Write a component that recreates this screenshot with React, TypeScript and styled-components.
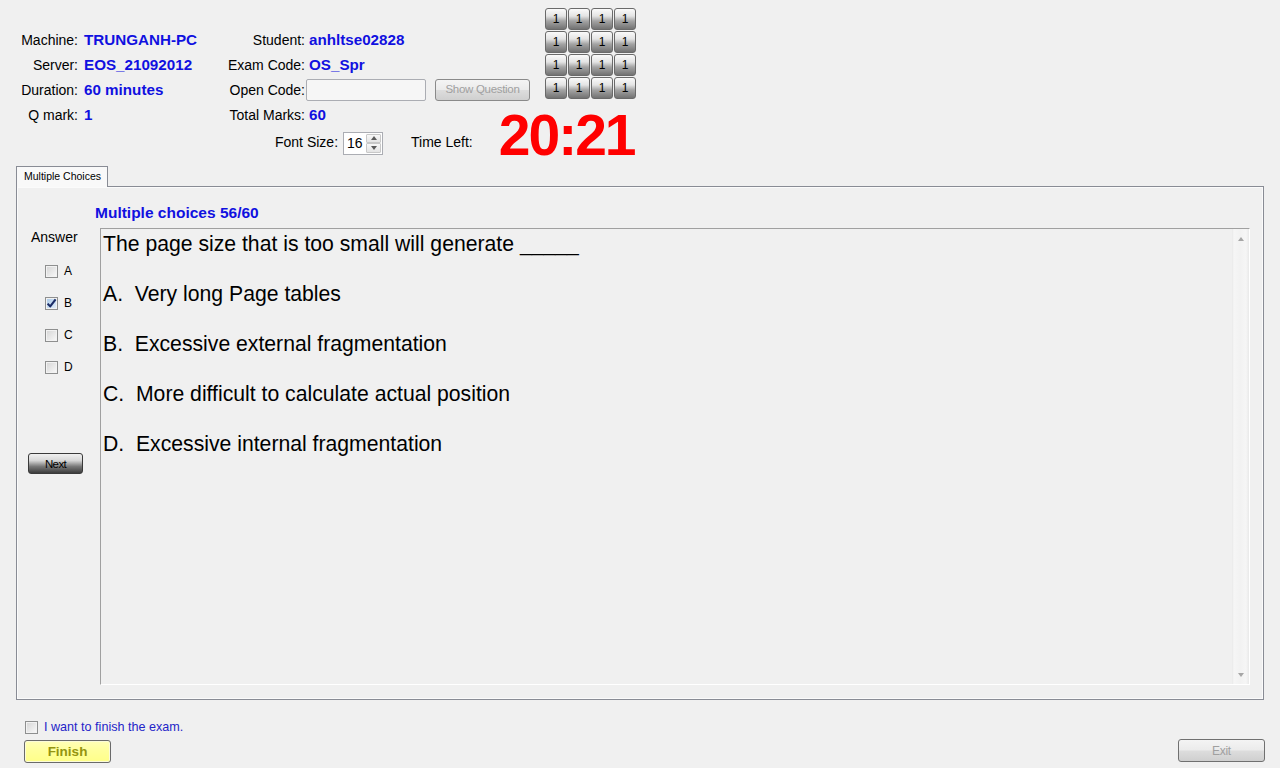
import React from "react";
import styled, { createGlobalStyle } from "styled-components";

const GlobalStyle = createGlobalStyle`
  html, body { margin: 0; padding: 0; background: #f0f0f0; }
  body { font-family: "Liberation Sans", Arial, sans-serif; color: #000; overflow: hidden; }
  * { box-sizing: border-box; }
`;

const Page = styled.div`
  width: 1280px;
  height: 768px;
  display: flex;
  flex-direction: column;
  background: #f0f0f0;
`;

const Header = styled.header`
  display: grid;
  grid-template-columns: 545px auto;
  grid-template-rows: 127px auto;
  margin-bottom: 11px;
`;

const InfoGrid = styled.div`
  grid-column: 1;
  grid-row: 1;
  padding-top: 27px;
  display: grid;
  grid-template-columns: 78px 122px 105px auto;
  grid-auto-rows: 25px;
  align-items: center;
  font-size: 14px;
`;

const Label = styled.span`
  text-align: right;
  white-space: nowrap;
`;

const Value = styled.span<{ $indent: number }>`
  padding-left: ${(p) => p.$indent}px;
  font-weight: bold;
  font-size: 15.2px;
  color: #1010e0;
  white-space: nowrap;
`;

const CodeCell = styled.div`
  display: flex;
  align-items: center;
`;

const CodeInput = styled.div`
  width: 120px;
  height: 22px;
  margin-left: 1px;
  background: #f6f6f6;
  border: 1px solid #abadb3;
  border-radius: 2px;
`;

const GreyButton = styled.button<{ $w: number; $h: number }>`
  width: ${(p) => p.$w}px;
  height: ${(p) => p.$h}px;
  padding: 0;
  border: 1px solid #707070;
  border-radius: 3px;
  background: linear-gradient(#f4f4f4 0%, #ebebeb 48%, #dddddd 52%, #cfcfcf 100%);
  color: #a0a0a0;
  font-family: "Liberation Sans", Arial, sans-serif;
  font-size: 11.5px;
  letter-spacing: -0.3px;
  display: flex;
  align-items: center;
  justify-content: center;
`;

const ShowQuestion = styled(GreyButton)`
  margin-left: 9px;
  border-color: #8a8a8a;
  padding-bottom: 2px;
`;

const NumberGrid = styled.div`
  grid-column: 2;
  grid-row: 1;
  align-self: start;
  margin-top: 8px;
  display: grid;
  grid-template-columns: repeat(4, 22px);
  grid-auto-rows: 22px;
  gap: 1px;
  justify-content: start;
`;

const NumButton = styled.div`
  border: 1px solid #6a6a6a;
  border-radius: 3px;
  background: linear-gradient(#fafafa 0%, #e4e4e4 35%, #a4a4a4 60%, #727272 100%);
  font-size: 12px;
  display: flex;
  align-items: center;
  justify-content: center;
  color: #000;
`;

const FontRow = styled.div`
  grid-column: 1 / span 2;
  grid-row: 2;
  height: 26px;
  margin-top: 2px;
  padding-left: 275px;
  display: flex;
  align-items: center;
  font-size: 14px;
`;

const Spin = styled.div`
  width: 40px;
  height: 23px;
  margin: 2px 0 0 5px;
  background: #fff;
  border: 1px solid #abadb3;
  display: flex;
`;

const SpinValue = styled.span`
  flex: 1;
  padding-left: 3px;
  font-size: 14px;
  line-height: 21px;
`;

const SpinArrows = styled.div`
  width: 16px;
  display: flex;
  flex-direction: column;
  padding: 1px 1px 1px 0;
`;

const SpinBtn = styled.span`
  flex: 1;
  border: 1px solid #c8c8c8;
  border-radius: 1px;
  background: linear-gradient(#f8f8f8, #e4e4e4);
  display: flex;
  align-items: center;
  justify-content: center;
`;

const Tri = styled.span<{ $up?: boolean; $color: string }>`
  width: 0;
  height: 0;
  border-left: 3.5px solid transparent;
  border-right: 3.5px solid transparent;
  ${(p) =>
    p.$up
      ? `border-bottom: 4px solid ${p.$color};`
      : `border-top: 4px solid ${p.$color};`}
`;

const TimeLabel = styled.span`
  margin-left: 28px;
`;

const Timer = styled.span`
  margin: 0 0 14px 26px;
  font-size: 57px;
  line-height: 40px;
  font-weight: bold;
  color: #ff0000;
  letter-spacing: -2px;
  white-space: nowrap;
`;

const TabStrip = styled.div`
  display: flex;
  padding-left: 16px;
  height: 20px;
  position: relative;
  z-index: 1;
`;

const Tab = styled.div`
  width: 92px;
  height: 21px;
  border: 1px solid #898c95;
  border-bottom: none;
  background: #f9f9f9;
  font-size: 10.5px;
  padding: 3px 0 0 7px;
  white-space: nowrap;
`;

const Panel = styled.section`
  margin: 0 16px;
  height: 514px;
  border: 1px solid #898c95;
  box-shadow: inset 0 0 0 1px #fbfbfb;
  display: flex;
  flex-direction: column;
  padding: 17px 13px 14px 0;
`;

const PanelTitle = styled.div`
  padding-left: 78px;
  font-size: 15.5px;
  line-height: 18px;
  font-weight: bold;
  color: #1010e0;
`;

const Body = styled.div`
  flex: 1;
  min-height: 0;
  margin-top: 6px;
  display: flex;
`;

const AnswerColumn = styled.div`
  width: 83px;
  padding-left: 11px;
  display: flex;
  flex-direction: column;
  align-items: flex-start;
`;

const AnswerTitle = styled.div`
  font-size: 14px;
  line-height: 16px;
  margin: 1px 0 0 3px;
`;

const Options = styled.div`
  margin: 10px 0 0 17px;
  display: flex;
  flex-direction: column;
`;

const OptionRow = styled.label`
  height: 32px;
  display: flex;
  align-items: center;
  gap: 6px;
  font-size: 12px;
`;

const Box = styled.span<{ $checked?: boolean }>`
  width: 13px;
  height: 13px;
  flex: none;
  border: 1px solid #8e8f8f;
  background: ${(p) =>
    p.$checked
      ? "linear-gradient(135deg, #a9c8e8, #e6f0fa)"
      : "linear-gradient(135deg, #d4d4d4, #fafafa)"};
  box-shadow: inset 0 0 0 1px #f2f2f2;
  display: flex;
  align-items: center;
  justify-content: center;
  overflow: visible;
`;

const NextButton = styled.button`
  margin-top: 70px;
  width: 55px;
  height: 21px;
  padding: 0;
  border: 1px solid #3a3a3a;
  border-radius: 3px;
  background: linear-gradient(#f0f0f0 0%, #d6d6d6 35%, #7a7a7a 65%, #3c3c3c 100%);
  font-family: "Liberation Sans", Arial, sans-serif;
  font-size: 11.5px;
  letter-spacing: -0.6px;
  color: #000;
`;

const QuestionBox = styled.div`
  flex: 1;
  display: flex;
  border-top: 1px solid #a0a0a0;
  border-left: 1px solid #a0a0a0;
  border-right: 1px solid #ffffff;
  border-bottom: 1px solid #ffffff;
`;

const QuestionText = styled.div`
  flex: 1;
  padding: 2px 0 0 2px;
  font-size: 21.2px;
  line-height: 25px;
`;

const Line = styled.p`
  margin: 0 0 25px;
  white-space: pre;
`;

const ScrollBar = styled.div`
  width: 17px;
  display: flex;
  flex-direction: column;
  justify-content: space-between;
  align-items: center;
  padding: 8px 0 7px;
  background: linear-gradient(90deg, #e9e9e9 0, #f6f6f6 2px, #f2f2f2 8px, #f6f6f6 14px, #e9e9e9 17px);
`;

const FinishArea = styled.div`
  padding: 20px 15px 0 24px;
`;

const ConfirmRow = styled.label`
  height: 14px;
  padding-left: 1px;
  display: flex;
  align-items: center;
  gap: 6px;
  font-size: 12.6px;
  color: #2424c8;
`;

const ButtonRow = styled.div`
  margin-top: 6px;
  display: flex;
  justify-content: space-between;
  align-items: flex-start;
`;

const FinishButton = styled.button`
  width: 87px;
  height: 23px;
  padding: 0;
  border: 1px solid #6a6a6a;
  border-radius: 3px;
  background: linear-gradient(#ffffb8 0%, #ffff9c 45%, #ffff88 100%);
  box-shadow: inset 0 0 0 1px #fbfbd8;
  font-family: "Liberation Sans", Arial, sans-serif;
  font-size: 13.5px;
  font-weight: bold;
  color: #949410;
`;

const ExitButton = styled(GreyButton)`
  margin-top: -1px;
  font-size: 12px;
`;

const CheckBox = ({ checked }: { checked?: boolean }) => (
  <Box $checked={checked}>
    {checked && (
      <svg width="11" height="11" viewBox="0 0 11 11" style={{ overflow: "visible" }}>
        <path d="M1.6 5.6 L4.2 8.4 L9.6 1.4" fill="none" stroke="#1b2c66" strokeWidth="2.1" strokeLinejoin="round" />
      </svg>
    )}
  </Box>
);

const lines = [
  "The page size that is too small will generate _____",
  "A.  Very long Page tables",
  "B.  Excessive external fragmentation",
  "C.  More difficult to calculate actual position",
  "D.  Excessive internal fragmentation",
];

export default function App() {
  return (
    <Page>
      <GlobalStyle />
      <Header>
        <InfoGrid>
          <Label>Machine:</Label>
          <Value $indent={6}>TRUNGANH-PC</Value>
          <Label>Student:</Label>
          <Value $indent={4}>anhltse02828</Value>

          <Label>Server:</Label>
          <Value $indent={6}>EOS_21092012</Value>
          <Label>Exam Code:</Label>
          <Value $indent={4}>OS_Spr</Value>

          <Label>Duration:</Label>
          <Value $indent={6}>60 minutes</Value>
          <Label>Open Code:</Label>
          <CodeCell>
            <CodeInput />
            <ShowQuestion $w={95} $h={22}>Show Question</ShowQuestion>
          </CodeCell>

          <Label>Q mark:</Label>
          <Value $indent={6}>1</Value>
          <Label>Total Marks:</Label>
          <Value $indent={4}>60</Value>
        </InfoGrid>
        <NumberGrid>
          {Array.from({ length: 16 }).map((_, i) => (
            <NumButton key={i}>1</NumButton>
          ))}
        </NumberGrid>
        <FontRow>
          <span>Font Size:</span>
          <Spin>
            <SpinValue>16</SpinValue>
            <SpinArrows>
              <SpinBtn>
                <Tri $up $color="#5a5a5a" />
              </SpinBtn>
              <SpinBtn>
                <Tri $color="#5a5a5a" />
              </SpinBtn>
            </SpinArrows>
          </Spin>
          <TimeLabel>Time Left:</TimeLabel>
          <Timer>20:21</Timer>
        </FontRow>
      </Header>

      <TabStrip>
        <Tab>Multiple Choices</Tab>
      </TabStrip>
      <Panel>
        <PanelTitle>Multiple choices 56/60</PanelTitle>
        <Body>
          <AnswerColumn>
            <AnswerTitle>Answer</AnswerTitle>
            <Options>
              {["A", "B", "C", "D"].map((k) => (
                <OptionRow key={k}>
                  <CheckBox checked={k === "B"} />
                  <span>{k}</span>
                </OptionRow>
              ))}
            </Options>
            <NextButton>Next</NextButton>
          </AnswerColumn>
          <QuestionBox>
            <QuestionText>
              {lines.map((l) => (
                <Line key={l}>{l}</Line>
              ))}
            </QuestionText>
            <ScrollBar>
              <Tri $up $color="#a6a6a6" />
              <Tri $color="#a6a6a6" />
            </ScrollBar>
          </QuestionBox>
        </Body>
      </Panel>

      <FinishArea>
        <ConfirmRow>
          <CheckBox />
          <span>I want to finish the exam.</span>
        </ConfirmRow>
        <ButtonRow>
          <FinishButton>Finish</FinishButton>
          <ExitButton $w={87} $h={23}>Exit</ExitButton>
        </ButtonRow>
      </FinishArea>
    </Page>
  );
}
